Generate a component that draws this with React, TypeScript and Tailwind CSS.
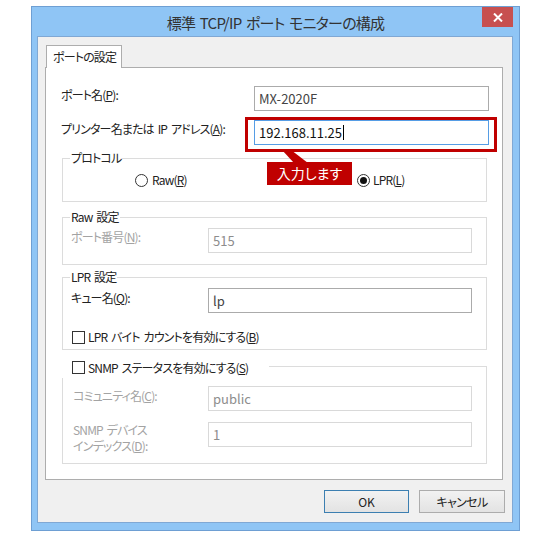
import type { ReactNode } from 'react'

const font = { fontFamily: '"Noto Sans CJK JP", "Noto Sans", sans-serif' }

function Field({ value, disabled, focused, caret }: { value: string; disabled?: boolean; focused?: boolean; caret?: boolean }) {
  const border = focused ? 'border-[#569de5]' : disabled ? 'border-[#d9d9d9]' : 'border-[#ababab]'
  const color = disabled ? 'text-[#8d8d8d]' : focused ? 'text-[#111]' : 'text-[#444]'
  return (
    <div className={`h-[25px] border bg-white flex items-center pl-[4px] text-[13px] tracking-normal ${border} ${color}`}>
      {value}
      {caret && <span className="ml-px w-px h-[15px] bg-black" />}
    </div>
  )
}

function Group({ legend, className, children }: { legend: ReactNode; className: string; children?: ReactNode }) {
  return (
    <div className={`relative ml-[16px] w-[425px] border border-[#dcdcdc] ${className}`}>
      {legend}
      {children}
    </div>
  )
}

function Legend({ text }: { text: string }) {
  return (
    <span className="absolute left-[7px] top-[-9px] bg-white px-px leading-[16px] text-[12px] text-[#222] whitespace-nowrap">
      {text}
    </span>
  )
}

function Check() {
  return <span className="w-[13px] h-[13px] border border-[#333] bg-white shrink-0" />
}

function Radio({ checked }: { checked?: boolean }) {
  return (
    <span className="w-[13px] h-[13px] rounded-full border border-[#333] bg-white flex items-center justify-center shrink-0">
      {checked && <span className="w-[7px] h-[7px] rounded-full bg-[#111]" />}
    </span>
  )
}

export default function App() {
  return (
    <div
      className="relative w-[547px] h-[535px] bg-white overflow-hidden pt-[6px] pl-[31px] [font-feature-settings:'palt'] [word-spacing:2px]"
      style={font}
    >
      {/* Window */}
      <div className="w-[489px] h-[525px] border border-[#6e9fd3] bg-[#8fc5f5] flex flex-col">
        <div className="relative h-[29px] flex items-center justify-center pt-[3px]">
          <span className="text-[15px] tracking-[-0.05em] text-[#333]">標準 TCP/IP ポート モニターの構成</span>
          <div className="absolute right-[6px] top-0 w-[31px] h-[20px] bg-[#c75050] flex items-center justify-center">
            <svg width="10" height="9" viewBox="0 0 10 9">
              <path d="M1 0.5 L9 8.5 M9 0.5 L1 8.5" stroke="white" strokeWidth="2" />
            </svg>
          </div>
        </div>

        {/* Client area */}
        <div className="ml-[5px] w-[476px] h-[487px] border border-[#80a8d4] bg-[#f0f0f0] flex flex-col">
          <div className="relative z-10 ml-[8px] mt-[8px] -mb-px w-[76px] h-[23px] border border-b-0 border-[#adadad] bg-white flex items-center pl-[6px] text-[12px] tracking-[-0.07em] whitespace-nowrap text-[#222]">
            ポートの設定
          </div>

          {/* Tab page */}
          <div className="ml-[7px] w-[458px] h-[413px] border border-[#adadad] bg-white flex flex-col text-[12px] tracking-[-0.07em] text-[#222]">
            <div className="mt-[18px] flex items-start pl-[15px]">
              <span className="w-[193px] leading-[18px]">
                ポート名(<u>P</u>):
              </span>
              <div className="w-[235px]">
                <Field value="MX-2020F" />
              </div>
            </div>
            <div className="mt-[9px] flex items-start pl-[15px]">
              <span className="w-[193px] leading-[18px]">
                プリンター名または IP アドレス(<u>A</u>):
              </span>
              <div className="w-[235px]">
                <Field value="192.168.11.25" focused caret />
              </div>
            </div>

            <Group legend={<Legend text="プロトコル" />} className="mt-[13px] h-[44px] flex items-center">
              <div className="ml-[72px] w-[222px] flex items-center gap-[4px]">
                <Radio />
                <span>
                  Raw(<u>R</u>)
                </span>
              </div>
              <div className="flex items-center gap-[3px]">
                <Radio checked />
                <span>
                  LPR(<u>L</u>)
                </span>
              </div>
            </Group>

            <Group legend={<Legend text="Raw 設定" />} className="mt-[15px] h-[48px] pt-[10px] pl-[8px]">
              <div className="flex items-start">
                <span className="w-[137px] leading-[18px] text-[#a3a3a3]">
                  ポート番号(<u>N</u>):
                </span>
                <div className="w-[264px]">
                  <Field value="515" disabled />
                </div>
              </div>
            </Group>

            <Group legend={<Legend text="LPR 設定" />} className="mt-[12px] h-[73px] pt-[10px] pl-[8px]">
              <div className="flex items-start">
                <span className="w-[137px] leading-[18px] pt-px">
                  キュー名(<u>Q</u>):
                </span>
                <div className="w-[264px]">
                  <Field value="lp" />
                </div>
              </div>
              <div className="mt-[15px] ml-px flex items-center gap-[3px]">
                <Check />
                <span>
                  LPR バイト カウントを有効にする(<u>B</u>)
                </span>
              </div>
            </Group>

            <Group
              legend={
                <div className="absolute left-[-1px] top-[-11px] w-[207px] h-[22px] bg-white flex items-start pt-[5px] pl-[10px] gap-[3px]">
                  <Check />
                  <span className="leading-[14px] whitespace-nowrap">
                    SNMP ステータスを有効にする(<u>S</u>)
                  </span>
                </div>
              }
              className="mt-[16px] h-[98px] pt-[19px] pl-[8px]"
            >
              <div className="flex items-start">
                <span className="w-[137px] leading-[18px] pt-px pl-[2px] text-[#a3a3a3]">
                  コミュニティ名(<u>C</u>):
                </span>
                <div className="w-[264px]">
                  <Field value="public" disabled />
                </div>
              </div>
              <div className="mt-[11px] flex items-start">
                <span className="w-[137px] leading-[16px] pl-[2px] text-[#a3a3a3]">
                  SNMP デバイス
                  <br />
                  インデックス(<u>D</u>):
                </span>
                <div className="w-[264px]">
                  <Field value="1" disabled />
                </div>
              </div>
            </Group>
          </div>

          {/* Buttons */}
          <div className="mt-[10px] flex justify-end gap-[10px] pr-[7px]">
            <button className="w-[85px] h-[23px] border border-[#3c7fb1] bg-gradient-to-b from-[#f2f2f2] to-[#e3e3e3] text-[12px] text-[#222]">
              OK
            </button>
            <button className="w-[86px] h-[23px] border border-[#acacac] bg-gradient-to-b from-[#f2f2f2] to-[#e3e3e3] text-[12px] tracking-[-0.05em] text-[#222]">
              キャンセル
            </button>
          </div>
        </div>
      </div>

      {/* Annotation overlay */}
      <div className="absolute left-[245px] top-[117px] w-[252px] h-[35px] border-[3px] border-[#c00000]" />
      <svg className="absolute left-[280px] top-[150px]" width="30" height="13" viewBox="0 0 30 13">
        <polygon points="2,0 11,0 28,13 14,13" fill="#c00000" />
      </svg>
      <div className="absolute left-[267px] top-[162px] w-[85px] h-[23px] bg-[#c00000] flex items-center justify-center text-[14px] text-white">
        入力します
      </div>
    </div>
  )
}
